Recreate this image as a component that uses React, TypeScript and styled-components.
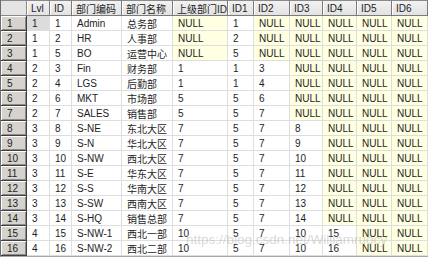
import React from "react";
import styled, { createGlobalStyle } from "styled-components";

const Global = createGlobalStyle`
  html, body { margin: 0; padding: 0; background: #ffffff; }
  body { width: 431px; height: 257px; overflow: hidden; }
`;

const COLS = [26, 23, 22, 50, 51, 55, 26, 36, 33, 34, 35, 36];
const HEADERS = ["Lvl", "ID", "部门编码", "部门名称", "上级部门ID", "ID1", "ID2", "ID3", "ID4", "ID5", "ID6"];

const N = null;
const ROWS: (string | number | null)[][] = [
  [1, 1, "Admin", "总务部", N, 1, N, N, N, N, N],
  [1, 2, "HR", "人事部", N, 2, N, N, N, N, N],
  [1, 5, "BO", "运营中心", N, 5, N, N, N, N, N],
  [2, 3, "Fin", "财务部", 1, 1, 3, N, N, N, N],
  [2, 4, "LGS", "后勤部", 1, 1, 4, N, N, N, N],
  [2, 6, "MKT", "市场部", 5, 5, 6, N, N, N, N],
  [2, 7, "SALES", "销售部", 5, 5, 7, N, N, N, N],
  [3, 8, "S-NE", "东北大区", 7, 5, 7, 8, N, N, N],
  [3, 9, "S-N", "华北大区", 7, 5, 7, 9, N, N, N],
  [3, 10, "S-NW", "西北大区", 7, 5, 7, 10, N, N, N],
  [3, 11, "S-E", "华东大区", 7, 5, 7, 11, N, N, N],
  [3, 12, "S-S", "华南大区", 7, 5, 7, 12, N, N, N],
  [3, 13, "S-SW", "西南大区", 7, 5, 7, 13, N, N, N],
  [3, 14, "S-HQ", "销售总部", 7, 5, 7, 14, N, N, N],
  [4, 15, "S-NW-1", "西北一部", 10, 5, 7, 10, 15, N, N],
  [4, 16, "S-NW-2", "西北二部", 10, 5, 7, 10, 16, N, N],
];

const Frame = styled.div`
  position: relative;
  width: 431px;
  height: 257px;
  background: #ffffff;
  font-family: "Liberation Sans", "Noto Sans CJK SC", sans-serif;
  font-size: 10px;
  color: #1a1a1a;
`;

const Grid = styled.div`
  display: grid;
  grid-template-columns: ${COLS.map((c) => c + "px").join(" ")};
  grid-template-rows: 16px repeat(16, 15px);
  width: 428px;
  border-left: 1px solid #6d6d6d;
  border-bottom: 1px solid #a8a8a8;
  box-sizing: border-box;
`;

const Corner = styled.div`
  background: #e4e4e4;
  border-right: 1px solid #8a8a8a;
  border-bottom: 1px solid #8a8a8a;
  border-top: 1px solid #8a8a8a;
`;

const HeadCell = styled.div`
  box-sizing: border-box;
  background: linear-gradient(#f2f2f2, #e2e2e2);
  border-top: 1px solid #8a8a8a;
  border-right: 1px solid #7a7a7a;
  border-bottom: 1px solid #7a7a7a;
  box-shadow: inset 1px 0 0 #ffffff;
  padding-left: 4px;
  display: flex;
  align-items: center;
  white-space: nowrap;
  overflow: hidden;
  font-size: 10px;
  color: #222;
`;

const RowHead = styled.div`
  box-sizing: border-box;
  background: #d6d3ce;
  border-right: 1px solid #404040;
  border-bottom: 1px solid #404040;
  box-shadow: inset 1px 1px 0 #ffffff, inset -1px -1px 0 #8c8c8c;
  padding-left: 6px;
  display: flex;
  align-items: center;
  font-size: 10px;
  color: #222;
`;

const Cell = styled.div<{ $null?: boolean; $selected?: boolean }>`
  box-sizing: border-box;
  background: ${(p) => (p.$selected ? "#dcdcdc" : p.$null ? "#ffffe1" : "#ffffff")};
  border-right: 1px solid #dedede;
  border-bottom: 1px solid #dedede;
  padding-left: 5px;
  display: flex;
  align-items: center;
  white-space: nowrap;
  overflow: hidden;
  color: #1e1e1e;
`;

const Watermark = styled.div`
  position: absolute;
  left: 186px;
  top: 232px;
  font-family: "Liberation Sans", sans-serif;
  font-size: 13.5px;
  color: rgba(170, 170, 170, 0.45);
  white-space: nowrap;
  pointer-events: none;
`;

export default function App() {
  return (
    <Frame>
      <Global />
      <Grid>
        <Corner />
        {HEADERS.map((h) => (
          <HeadCell key={h}>{h}</HeadCell>
        ))}
        {ROWS.map((row, i) => (
          <React.Fragment key={i}>
            <RowHead>{i + 1}</RowHead>
            {row.map((v, j) => (
              <Cell key={j} $null={v === null} $selected={i === 0 && j === 0}>
                {v === null ? "NULL" : v}
              </Cell>
            ))}
          </React.Fragment>
        ))}
      </Grid>
      <Watermark>https://blog.csdn.net/Williamruocy</Watermark>
    </Frame>
  );
}
